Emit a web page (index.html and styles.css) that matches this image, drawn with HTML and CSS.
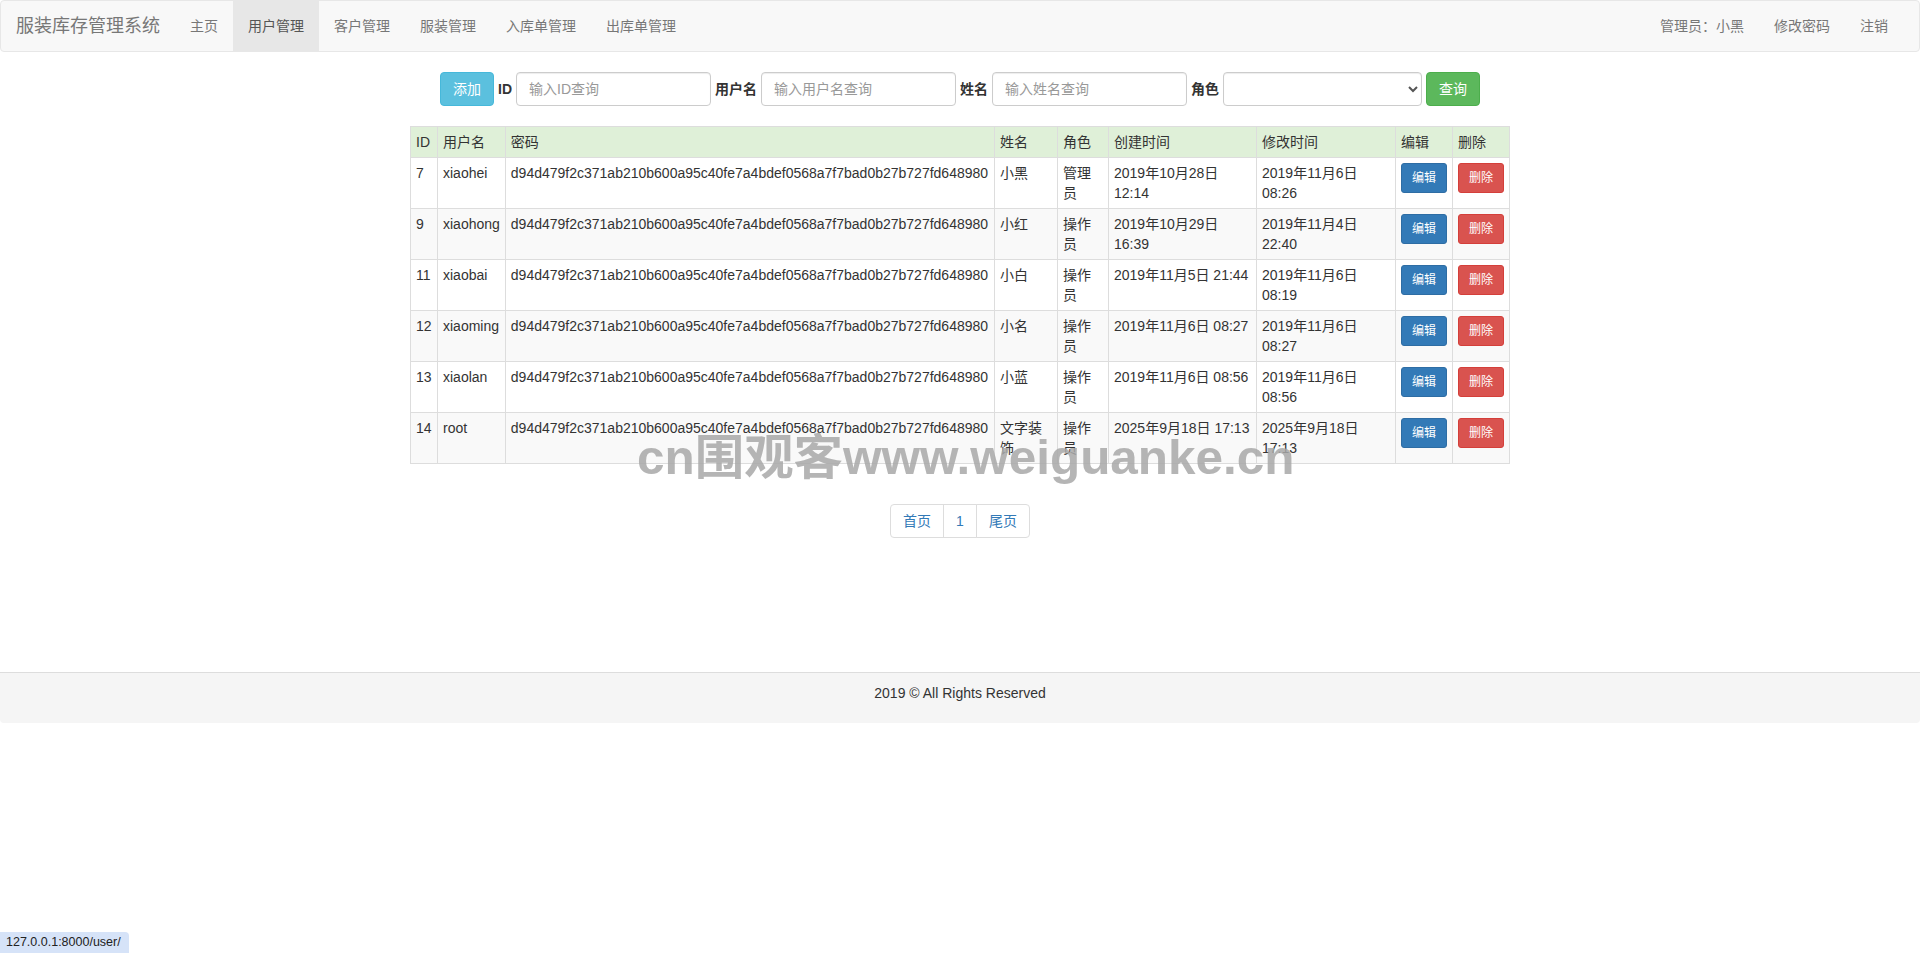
FILE: index.html
```html
<!DOCTYPE html>
<html lang="zh-CN">
<head>
    <meta charset="UTF-8">
    <meta name="viewport" content="width=device-width, initial-scale=1.0">
    <title>用户管理 - 服装库存管理系统</title>
    <link rel="stylesheet" href="styles.css">
</head>
<body>
    <nav class="navbar">
        <a class="brand" href="#">服装库存管理系统</a>
        <ul class="nav">
            <li><a href="#">主页</a></li>
            <li class="active"><a href="#">用户管理</a></li>
            <li><a href="#">客户管理</a></li>
            <li><a href="#">服装管理</a></li>
            <li><a href="#">入库单管理</a></li>
            <li><a href="#">出库单管理</a></li>
        </ul>
        <ul class="nav nav-right">
            <li><a href="#">管理员：小黑</a></li>
            <li><a href="#">修改密码</a></li>
            <li><a href="#">注销</a></li>
        </ul>
    </nav>

    <div class="main">
        <form class="search">
            <button type="button" class="btn btn-info">添加</button>
            <label for="id">ID</label>
            <input type="text" id="id" class="form-control" placeholder="输入ID查询">
            <label for="username">用户名</label>
            <input type="text" id="username" class="form-control" placeholder="输入用户名查询">
            <label for="name">姓名</label>
            <input type="text" id="name" class="form-control" placeholder="输入姓名查询">
            <label for="role">角色</label>
            <select id="role" class="form-control select">
                <option></option>
                <option>管理员</option>
                <option>操作员</option>
            </select>
            <button type="submit" class="btn btn-success">查询</button>
        </form>

        <table class="table">
            <tr class="head">
                <td class="c-id">ID</td>
                <td class="c-user">用户名</td>
                <td>密码</td>
                <td class="c-name">姓名</td>
                <td class="c-role">角色</td>
                <td class="c-created">创建时间</td>
                <td class="c-modified">修改时间</td>
                <td class="c-btn">编辑</td>
                <td class="c-btn">删除</td>
            </tr>
            <tr>
                <td>7</td>
                <td>xiaohei</td>
                <td>d94d479f2c371ab210b600a95c40fe7a4bdef0568a7f7bad0b27b727fd648980</td>
                <td>小黑</td>
                <td>管理员</td>
                <td>2019年10月28日 12:14</td>
                <td>2019年11月6日 08:26</td>
                <td><a class="btn btn-sm btn-primary" href="#">编辑</a></td>
                <td><a class="btn btn-sm btn-danger" href="#">删除</a></td>
            </tr>
            <tr>
                <td>9</td>
                <td>xiaohong</td>
                <td>d94d479f2c371ab210b600a95c40fe7a4bdef0568a7f7bad0b27b727fd648980</td>
                <td>小红</td>
                <td>操作员</td>
                <td>2019年10月29日 16:39</td>
                <td>2019年11月4日 22:40</td>
                <td><a class="btn btn-sm btn-primary" href="#">编辑</a></td>
                <td><a class="btn btn-sm btn-danger" href="#">删除</a></td>
            </tr>
            <tr>
                <td>11</td>
                <td>xiaobai</td>
                <td>d94d479f2c371ab210b600a95c40fe7a4bdef0568a7f7bad0b27b727fd648980</td>
                <td>小白</td>
                <td>操作员</td>
                <td>2019年11月5日 21:44</td>
                <td>2019年11月6日 08:19</td>
                <td><a class="btn btn-sm btn-primary" href="#">编辑</a></td>
                <td><a class="btn btn-sm btn-danger" href="#">删除</a></td>
            </tr>
            <tr>
                <td>12</td>
                <td>xiaoming</td>
                <td>d94d479f2c371ab210b600a95c40fe7a4bdef0568a7f7bad0b27b727fd648980</td>
                <td>小名</td>
                <td>操作员</td>
                <td>2019年11月6日 08:27</td>
                <td>2019年11月6日 08:27</td>
                <td><a class="btn btn-sm btn-primary" href="#">编辑</a></td>
                <td><a class="btn btn-sm btn-danger" href="#">删除</a></td>
            </tr>
            <tr>
                <td>13</td>
                <td>xiaolan</td>
                <td>d94d479f2c371ab210b600a95c40fe7a4bdef0568a7f7bad0b27b727fd648980</td>
                <td>小蓝</td>
                <td>操作员</td>
                <td>2019年11月6日 08:56</td>
                <td>2019年11月6日 08:56</td>
                <td><a class="btn btn-sm btn-primary" href="#">编辑</a></td>
                <td><a class="btn btn-sm btn-danger" href="#">删除</a></td>
            </tr>
            <tr>
                <td>14</td>
                <td>root</td>
                <td>d94d479f2c371ab210b600a95c40fe7a4bdef0568a7f7bad0b27b727fd648980</td>
                <td>文字装饰</td>
                <td>操作员</td>
                <td>2025年9月18日 17:13</td>
                <td>2025年9月18日 17:13</td>
                <td><a class="btn btn-sm btn-primary" href="#">编辑</a></td>
                <td><a class="btn btn-sm btn-danger" href="#">删除</a></td>
            </tr>
        </table>

        <div class="pager">
            <ul class="pagination">
                <li><a href="#">首页</a></li>
                <li><a href="#">1</a></li>
                <li><a href="#">尾页</a></li>
            </ul>
        </div>
    </div>

    <footer class="footer">
        <p>2019 &copy; All Rights Reserved</p>
    </footer>

    <div class="watermark">cn围观客www.weiguanke.cn</div>
    <div class="status">127.0.0.1:8000/user/</div>
</body>
</html>
```

FILE: styles.css
```css
* {
    box-sizing: border-box;
}
body {
    margin: 0;
    font-family: "Liberation Sans", Arial, "Noto Sans CJK SC", sans-serif;
    font-size: 14px;
    line-height: 20px;
    color: #333;
    background: #fff;
}
a {
    text-decoration: none;
}

/* navbar */
.navbar {
    display: flex;
    height: 52px;
    margin-bottom: 20px;
    background-color: #f8f8f8;
    border: 1px solid #e7e7e7;
    border-radius: 4px;
}
.brand {
    padding: 15px;
    font-size: 18px;
    line-height: 20px;
    color: #777;
}
.nav {
    display: flex;
    list-style: none;
    margin: 0;
    padding: 0;
}
.nav a {
    display: block;
    padding: 15px;
    line-height: 20px;
    color: #777;
}
.nav .active a {
    color: #555;
    background-color: #e7e7e7;
}
.nav-right {
    margin-left: auto;
    margin-right: 16px;
}

/* search form */
.main {
    min-height: 600px;
}
.search {
    display: flex;
    justify-content: center;
    align-items: center;
    gap: 4px;
    margin: 0;
}
.search label {
    font-weight: bold;
}
.btn {
    display: inline-block;
    padding: 6px 12px;
    font-family: inherit;
    font-size: 14px;
    line-height: 20px;
    border: 1px solid transparent;
    border-radius: 4px;
    color: #fff;
    text-align: center;
    cursor: pointer;
}
.btn-info {
    background-color: #5bc0de;
    border-color: #46b8da;
}
.btn-success {
    background-color: #5cb85c;
    border-color: #4cae4c;
}
.btn-primary {
    background-color: #337ab7;
    border-color: #2e6da4;
}
.btn-danger {
    background-color: #d9534f;
    border-color: #d43f3a;
}
.btn-sm {
    padding: 5px 10px;
    font-size: 12px;
    line-height: 18px;
    border-radius: 3px;
}
.form-control {
    width: 195px;
    height: 34px;
    padding: 6px 12px;
    font-family: inherit;
    font-size: 14px;
    line-height: 20px;
    color: #555;
    background-color: #fff;
    border: 1px solid #ccc;
    border-radius: 4px;
    box-shadow: inset 0 1px 1px rgba(0, 0, 0, 0.075);
}
.form-control::placeholder {
    color: #999;
}
.select {
    width: 199px;
    padding: 6px 8px;
}

/* table */
.table {
    width: 1100px;
    margin: 20px auto;
    border-collapse: collapse;
    border-spacing: 0;
}
.table td {
    padding: 5px;
    line-height: 20px;
    vertical-align: top;
    border: 1px solid #ddd;
}
.table tr:nth-child(odd) {
    background-color: #f9f9f9;
}
.table tr.head {
    background-color: #dff0d8;
}
.c-id { width: 27px; }
.c-user { width: 67px; }
.c-name { width: 63px; }
.c-role { width: 51px; }
.c-created { width: 148px; }
.c-modified { width: 139px; }
.c-btn { width: 57px; }

/* pagination */
.pager {
    text-align: center;
}
.pagination {
    display: inline-flex;
    list-style: none;
    margin: 20px 0;
    padding: 0;
}
.pagination a {
    display: block;
    padding: 6px 12px;
    line-height: 20px;
    color: #337ab7;
    background-color: #fff;
    border: 1px solid #ddd;
    margin-left: -1px;
}
.pagination li:first-child a {
    margin-left: 0;
    border-radius: 4px 0 0 4px;
}
.pagination li:last-child a {
    border-radius: 0 4px 4px 0;
}

/* footer */
.footer {
    padding: 10px;
    text-align: center;
    background-color: #f5f5f5;
    border-top: 1px solid #ddd;
    border-radius: 0 0 4px 4px;
}
.footer p {
    margin: 0 0 10px;
}

/* overlays */
.watermark {
    position: absolute;
    left: 637px;
    top: 434px;
    font-size: 48px;
    line-height: 48px;
    font-weight: bold;
    color: rgba(168, 168, 168, 0.85);
    white-space: nowrap;
    transform: scaleX(1.03);
    transform-origin: 0 0;
    pointer-events: none;
}
.status {
    position: fixed;
    left: 0;
    bottom: 0;
    height: 21px;
    padding: 0 8px 0 6px;
    font-size: 12.5px;
    line-height: 21px;
    color: #222;
    background-color: #d6e3f8;
    border-top-right-radius: 4px;
}
```
